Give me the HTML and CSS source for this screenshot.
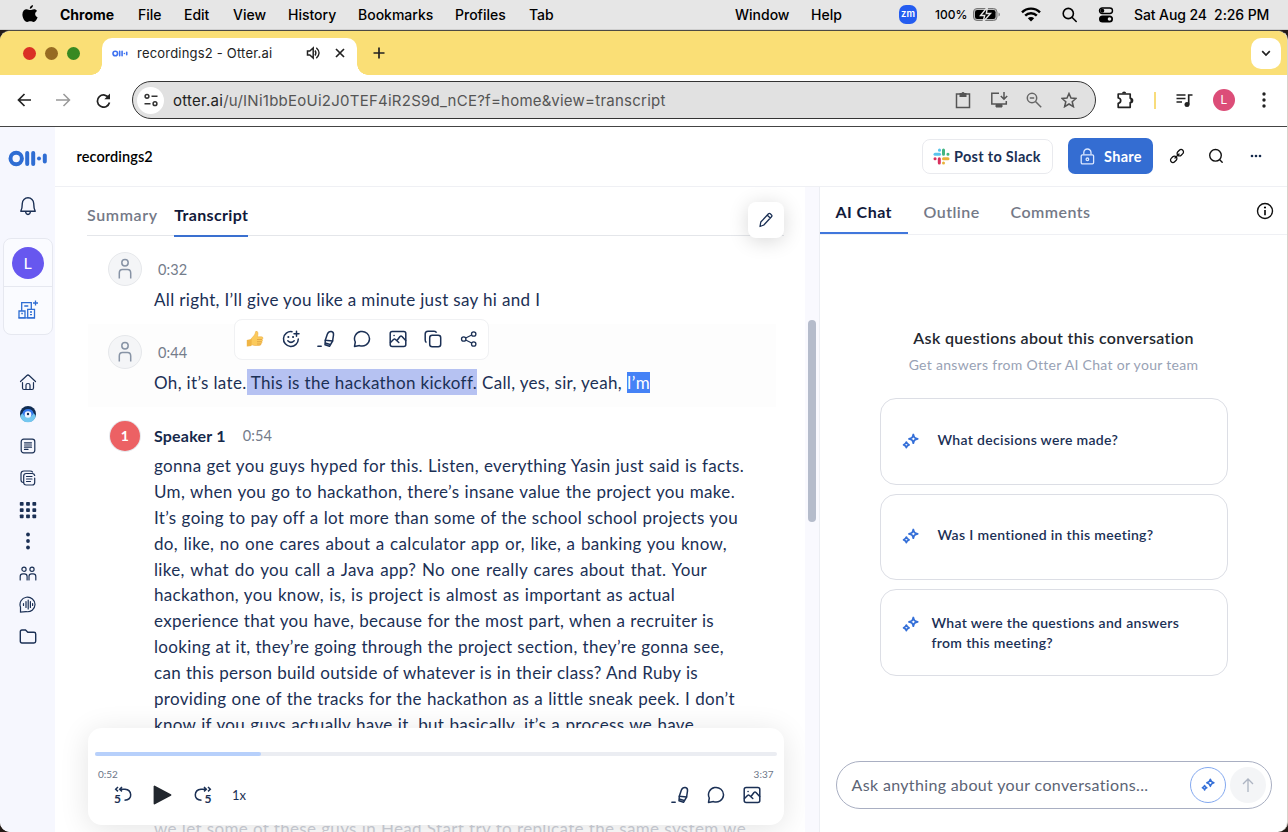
FILE: index.html
```html
<!DOCTYPE html>
<html lang="en">
<head>
<meta charset="utf-8">
<title>recordings2 - Otter.ai</title>
<link rel="stylesheet" href="styles.css">
</head>
<body>
<svg class="defs" width="0" height="0">
  <defs>
    <symbol id="sparkle" viewBox="0 0 18 18"><path d="M12 1.600c.7 3.200 1.400 3.900 4.600 4.600-3.200.7-3.900 1.400-4.600 4.600-.7-3.200-1.400-3.900-4.600-4.600 3.200-.7 3.900-1.400 4.600-4.600zM4.600 9.600c.5 1.900 1 2.400 2.900 2.900-1.900.5-2.400 1-2.900 2.900-.5-1.900-1-2.400-2.900-2.900 1.900-.5 2.400-1 2.900-2.900z" fill="none" stroke="currentColor" stroke-width="1.900" stroke-linejoin="round"/></symbol>
    <symbol id="marker" viewBox="0 0 18 18"><g fill="none" stroke="currentColor" stroke-width="1.500" stroke-linejoin="round" stroke-linecap="round"><path d="M8.300 10.300 10.300 4.300Q11.500 1.200 14.300 1.500q2.500.4 2.200 3.300L15.600 11z"/><path d="m8.300 10.300-.3 4.500 4.500 1.500 3.100-5.300M8.200 13l5 1.500"/><path d="M.9 16.300h3.300"/></g></symbol>
    <symbol id="bubble" viewBox="0 0 18 18"><path d="M1.500 16.400 2.300 12A7.500 7.300 0 1 1 6.500 15.600z" fill="none" stroke="currentColor" stroke-width="1.500" stroke-linejoin="round"/></symbol>
    <symbol id="image" viewBox="0 0 18 18"><g fill="none" stroke="currentColor" stroke-width="1.500" stroke-linejoin="round" stroke-linecap="round"><rect x="1.200" y="1.500" width="15.600" height="15" rx="2"/><path d="M1.500 12.500 4.500 9.500q1-.8 2 0l3.300 3M8 10.500 11 6.500q1-1 2 0l3.700 4"/><path d="M5 5.500h.1"/></g></symbol>
    <symbol id="person" viewBox="0 0 16 22"><g fill="none" stroke="currentColor" stroke-width="1.500"><circle cx="8" cy="4.800" r="3.200"/><path d="M2.300 20.500v-5.500Q2.300 11.500 5.500 11.500h5q3.200 0 3.200 3.500V20.500"/></g></symbol>
    <symbol id="otter" viewBox="0 0 40 17"><circle cx="8.200" cy="8.500" r="5.700" fill="none" stroke="currentColor" stroke-width="4"/><path d="M19.200 3v11M25.200 3v11M36.800 5.500v6" stroke="currentColor" stroke-width="4" stroke-linecap="round"/><circle cx="31" cy="8.500" r="2" fill="currentColor"/></symbol>
  </defs>
</svg>

<header class="menubar">
  <svg class="apple" width="16" height="18" viewBox="0 0 16 18"><path d="M11 0c.1 1.900-1.400 3.700-3.200 3.800C7.600 2 9.200.3 11 0zM15 6c-2.700 1.600-2.300 5 .6 6.200-.8 2.300-2.300 4.700-4 4.700-1.300 0-1.700-.7-3.200-.7s-2 .7-3.200.7C2.600 16.900.4 12.700.4 9.400c0-3.300 2.100-5.200 4.200-5.200 1.500 0 2.500.8 3.700.8 1.100 0 2-.8 3.800-.8 1.200 0 2.300.6 2.900 1.800z"/></svg>
  <b>Chrome</b><span>File</span><span>Edit</span><span>View</span><span>History</span><span>Bookmarks</span><span>Profiles</span><span>Tab</span><span>Window</span><span>Help</span>
  <span class="zoom-app">zm</span>
  <span class="percent">100%</span>
  <svg width="28" height="14" viewBox="0 0 28 14"><rect x=".5" y=".5" width="23.500" height="12" rx="3.500" fill="#bbb" stroke="#777"/><rect x="2" y="2" width="20.500" height="9" rx="2.200"/><path d="M25.500 4.500v4q1.500-.5 1.500-2t-1.500-2z" fill="#888"/><path d="M14.500-1 7.500 7.500h4.200L10 14l7.500-8.500h-4.200z" stroke="#e6e6e6" stroke-width="1.400"/></svg>
  <svg width="20" height="15" viewBox="0 0 20 15"><g fill="none" stroke="#000" stroke-width="2.400"><path d="M1 5.300a12.800 12.800 0 0 1 18 0M4.200 8.600a8.200 8.200 0 0 1 11.600 0"/></g><path d="M10 14.500 6.800 11.300a4.500 4.500 0 0 1 6.400 0z"/></svg>
  <svg width="16" height="16" viewBox="0 0 16 16"><g fill="none" stroke="#000" stroke-width="1.600" stroke-linecap="round"><circle cx="6.300" cy="6.500" r="5.100"/><path d="m10.200 10.500 4 4"/></g></svg>
  <svg width="16" height="16" viewBox="0 0 16 16"><rect x="1.500" y="1" width="13" height="5.500" rx="2.750" fill="none" stroke="#000" stroke-width="1.400"/><circle cx="4.300" cy="3.750" r="2"/><rect x="1" y="8.500" width="14" height="7" rx="3.500"/><circle cx="11.500" cy="12" r="1.800" fill="#e6e6e6"/></svg>
  <span class="clock">Sat Aug 24&nbsp; 2:26 PM</span>
</header>

<div class="desktop">
<div class="window">
  <div class="tabstrip">
    <div class="lights"><i class="red"></i><i class="amber"></i><i class="green"></i></div>
    <div class="browser-tab">
      <svg class="favicon" width="16" height="7"><use href="#otter"/></svg>
      <span class="tab-title">recordings2 - Otter.ai</span>
      <svg width="15" height="14" viewBox="0 0 15 14"><path d="M1.500 5h2.300L7.200 2v10L3.800 9H1.500z" fill="none" stroke="#222" stroke-width="1.500"/><path d="M9 4.500q1.800 2.500 0 5M10.300 1.800q5.500 5.200 0 10.400" fill="none" stroke="#222" stroke-width="1.400"/></svg>
      <svg width="10" height="10" viewBox="0 0 10 10"><path d="m1 1 8 8M9 1 1 9" stroke="#222" stroke-width="1.700"/></svg>
    </div>
    <svg class="new-tab" width="12" height="12" viewBox="0 0 12 12"><path d="M6 .5v11M.5 6h11" stroke="#222" stroke-width="1.700"/></svg>
    <div class="tab-search"><svg width="10" height="7" viewBox="0 0 10 7"><path d="m1.200 1.200 3.800 3.800 3.800-3.800" fill="none" stroke="#222" stroke-width="1.700"/></svg></div>
  </div>

  <div class="toolbar">
    <svg width="15" height="14" viewBox="0 0 15 14"><path d="M14 7H2M7.500 1l-6 6 6 6" fill="none" stroke="#222" stroke-width="1.700"/></svg>
    <svg width="15" height="14" viewBox="0 0 15 14"><path d="M0 7h13M7.500 1l6 6-6 6" fill="none" stroke="#999" stroke-width="1.500"/></svg>
    <svg width="15" height="15" viewBox="0 0 15 15"><path d="M13 5.300A6.100 6.100 0 1 0 13.500 9.500" fill="none" stroke="#222" stroke-width="1.700"/><path d="M14 .5v5.700H8.300z" fill="#222"/></svg>
    <div class="omnibox">
      <span class="site-info"><svg width="14" height="14" viewBox="0 0 14 14"><g fill="none" stroke="#333" stroke-width="1.500"><circle cx="3" cy="3.300" r="1.900"/><circle cx="11" cy="10.700" r="1.900"/><path d="M7.500 3.300h6M.5 10.700h6"/></g></svg></span>
      <span class="url"><em>otter.ai</em>/u/INi1bbEoUi2J0TEF4iR2S9d_nCE?f=home&amp;view=transcript</span>
      <svg width="16" height="18" viewBox="0 0 16 18"><path d="M1.500 3h13v13.500h-13z" fill="none" stroke="#555" stroke-width="1.500"/><path d="M4.500 2h2a1.600 1.600 0 0 1 3 0h2v4h-7z" fill="#555"/></svg>
      <svg width="18" height="18" viewBox="0 0 18 18"><path d="M9 2.200H1.800V13h14.500V10" fill="none" stroke="#555" stroke-width="1.500"/><path d="M6 13.500h6V16H6z" fill="#555" stroke="#555"/><path d="M14 1v7M10.800 5l3.200 3.200L17.200 5" fill="none" stroke="#555" stroke-width="1.500"/></svg>
      <svg width="16" height="16" viewBox="0 0 16 16"><g fill="none" stroke="#666" stroke-width="1.500"><circle cx="6" cy="6" r="4.700"/><path d="m9.500 9.500 5.700 5.700M3.800 6h4.400"/></g></svg>
      <svg width="16" height="16" viewBox="0 0 16 16"><path d="m8 1.500 2 4.600 5 .4-3.800 3.300 1.200 4.900L8 12l-4.400 2.700 1.200-4.900L1 6.500l5-.4z" fill="none" stroke="#555" stroke-width="1.500"/></svg>
    </div>
    <svg width="18" height="18" viewBox="0 0 18 18"><path d="M2.200 3h12v4.300q2.300.2 2.300 2.200t-2.300 2.200v4.600h-12v-4q2.500-.3 2.500-2.700T2.200 7z" fill="none" stroke="#222" stroke-width="1.700" stroke-linejoin="round"/><path d="M6 2.500a2.100 2.100 0 0 1 4.200 0zM14.500 7.300a2.200 2.200 0 0 1 0 4.400z" fill="#222"/></svg>
    <i class="separator"></i>
    <svg width="17" height="15" viewBox="0 0 17 15"><path d="M.5 2h9M.5 5.500h9M.5 9h5.500M12.700 11.500V2h3.800" fill="none" stroke="#222" stroke-width="1.700"/><circle cx="11" cy="11.500" r="2.500" fill="#222"/></svg>
    <span class="profile">L</span>
    <svg width="4" height="16" viewBox="0 0 4 16" fill="#222"><circle cx="2" cy="2" r="1.700"/><circle cx="2" cy="8" r="1.700"/><circle cx="2" cy="14" r="1.700"/></svg>
  </div>

  <div class="app">
    <nav class="sidebar">
      <svg class="logo" width="40" height="17"><use href="#otter"/></svg>
      <svg class="bell" width="18" height="20" viewBox="0 0 18 20"><path d="M1.800 15.300Q3.300 12 3.300 7.500A5.600 5.600 0 0 1 14.700 7.500Q14.700 12 16.200 15.300zM6.500 15.500q.5 3 2.500 3t2.500-3" fill="none" stroke="currentColor" stroke-width="1.400" stroke-linejoin="round"/></svg>
      <div class="account">
        <div class="account-cell"><span class="avatar">L</span></div>
        <div class="account-cell"><svg class="blue" width="20" height="19" viewBox="0 0 20 19"><g fill="none" stroke="currentColor" stroke-width="1.300"><path d="M3.700 11V2.700h9.600v6M1 17.800V11h6v6.800zM7 17.500V11M9.700 9.300h6.800v8.500H9.700z"/><path d="M6.300 6h4M.5 17.800h16.500M3.300 13.500h1.500M12 12h2M12 14.700h2M17.500.5v5M15 3h5"/></g></svg></div>
      </div>
      <div class="nav-list">
        <svg width="18" height="18" viewBox="0 0 18 18"><path d="m1.500 8.500 6.400-6q1.100-1 2.200 0l6.400 6M3.500 9.500v5.500q0 1.500 1.500 1.500h8q1.500 0 1.500-1.500V9.500M7 16.500V12q0-1.500 2-1.500t2 1.500v4.500" fill="none" stroke="currentColor" stroke-width="1.200" stroke-linecap="round"/></svg>
        <svg width="18" height="18" viewBox="0 0 18 18"><circle cx="9" cy="9" r="8" fill="#102c52"/><path d="M1.300 11.500q1-3.500 4-4h7.400q3 .5 4 4a8 8 0 0 1-15.400 0z" fill="#73c7f0"/><path d="M3.300 8.500q1-4.500 5.700-4.500t5.700 4.500l-2.700 3H6z" fill="#3479ec"/><circle cx="9" cy="9.500" r="3.300" fill="#f4f7ff"/><circle cx="9" cy="9" r="1.200" fill="#102c52"/></svg>
        <svg width="16" height="16" viewBox="0 0 16 16"><g fill="none" stroke="currentColor" stroke-width="1.200" stroke-linecap="round"><rect x="1.200" y="1.200" width="13.600" height="13.600" rx="2.500"/><path d="M4.500 4.800h7M4.500 7h7M4.500 9.200h7M4.500 11.400h3.500"/></g></svg>
        <svg width="16" height="16" viewBox="0 0 16 16"><g fill="none" stroke="currentColor" stroke-width="1.200" stroke-linecap="round"><path d="M3.500 12.500q-2.500 0-2.500-2.500V4q0-3 3-3h6q2 0 2.500 1"/><path d="M14.700 8v4.500q0 2.500-2.500 2.500h-6q-2.500 0-2.500-2.500V6q0-2.500 2.500-2.500h6q2 0 2.500 2"/><path d="M6.500 6.500h5.500M6.500 9h5.500M6.500 11.500h4"/></g></svg>
        <svg width="18" height="18" viewBox="0 0 18 18" fill="currentColor"><g id="row"><rect x=".8" y="1" width="3.800" height="3.800" rx=".8"/><rect x="7.100" y="1" width="3.800" height="3.800" rx=".8"/><rect x="13.400" y="1" width="3.800" height="3.800" rx=".8"/></g><use href="#row" y="6.200"/><use href="#row" y="12.400"/></svg>
        <svg width="18" height="18" viewBox="0 0 18 18" fill="currentColor"><circle cx="9" cy="2.500" r="1.900"/><circle cx="9" cy="9" r="1.900"/><circle cx="9" cy="15.500" r="1.900"/></svg>
        <svg width="18" height="16" viewBox="0 0 18 16"><g fill="none" stroke="currentColor" stroke-width="1.200" stroke-linecap="round"><circle cx="5" cy="4.200" r="2.100"/><circle cx="13" cy="4.200" r="2.100"/><path d="M1.200 15v-3.500q0-2.700 2.700-2.700h1.500q2.700 0 2.700 2.700V15M10 15v-3.500q0-2.700 2.500-2.700h1.700q2.600 0 2.600 2.700V15"/></g></svg>
        <svg width="18" height="17" viewBox="0 0 18 17"><g fill="none" stroke="currentColor" stroke-width="1.200" stroke-linecap="round"><path d="M1.500 16v-5A7.500 7.300 0 1 1 7 15.600L1.500 16z"/><path d="M4.500 7.500v2M7 5.500v6M9.200 4v9M11.400 5.500v6M13.600 7.500v2"/></g></svg>
        <svg width="18" height="15" viewBox="0 0 18 15"><path d="M1.300 2.800q0-1.800 1.700-1.800h3.500l2.300 2.300h6.200q1.700 0 1.700 1.700v7.300q0 1.700-1.700 1.700H3q-1.700 0-1.700-1.700z" fill="none" stroke="currentColor" stroke-width="1.400"/></svg>
      </div>
    </nav>

    <main class="content">
      <div class="page-head">
        <h1>recordings2</h1>
        <button class="slack">
          <svg width="17" height="17" viewBox="0 0 17 17"><g stroke-width="3" stroke-linecap="round"><path d="M6.500 6.300H2" stroke="#5bc4ec"/><path d="M6.500 2.100v.1" stroke="#5bc4ec"/><path d="M10.500 6.300V2M14.900 6.300h.1" stroke="#43b581"/><path d="M10.500 10.700H15M10.500 15v.1" stroke="#e9b13b"/><path d="M6.300 10.700V15M2 10.700h.1" stroke="#d9315e"/></g></svg>
          <span>Post to Slack</span>
        </button>
        <button class="share">
          <svg width="15" height="17" viewBox="0 0 15 17"><g fill="none" stroke="#dce8ff" stroke-width="1.300"><rect x="1.200" y="6.800" width="12.400" height="9" rx="1.200"/><path d="M3.800 6.500V4.600a3.600 3.600 0 0 1 7.200 0v1.900"/><circle cx="7.400" cy="11.300" r="1.300"/></g></svg>
          <span>Share</span>
        </button>
        <svg width="16" height="16" viewBox="0 0 16 16"><g fill="none" stroke="#111" stroke-width="1.300" stroke-linecap="round"><rect x="-3.500" y="-2.400" width="7" height="4.800" rx="2.400" transform="translate(11.300 4.700) rotate(-45)"/><rect x="-3.500" y="-2.400" width="7" height="4.800" rx="2.400" transform="translate(4.700 11.300) rotate(-45)"/><path d="m6 10 4-4"/></g></svg>
        <svg width="16" height="16" viewBox="0 0 16 16"><g fill="none" stroke="#111" stroke-width="1.400" stroke-linecap="round"><circle cx="7.500" cy="7.300" r="5.800"/><path d="m11.700 11.700 2.500 2.600"/></g></svg>
        <svg width="12" height="4" viewBox="0 0 12 4" fill="#14294b"><circle cx="2" cy="2" r="1.300"/><circle cx="6" cy="2" r="1.300"/><circle cx="10" cy="2" r="1.300"/></svg>
      </div>

      <div class="columns">
        <section class="transcript">
          <div class="view-tabs"><span class="tab summary">Summary</span><span class="tab active">Transcript</span></div>
          <button class="edit"><svg width="14" height="16" viewBox="0 0 14 16"><path d="M1 14.500 1.800 10 9.500 1.800q.9-.8 1.800 0l1.200 1.100q.9.900 0 1.800L4.800 13zM8.300 3.200l3 2.800" fill="none" stroke="currentColor" stroke-width="1.300" stroke-linejoin="round"/></svg></button>

          <article class="segment first">
            <div class="who"><span class="face"><svg width="16" height="22"><use href="#person"/></svg></span><time>0:32</time></div>
            <p>All right, I’ll give you like a minute just say hi and I</p>
          </article>
          <article class="segment hovered">
            <div class="who"><span class="face"><svg width="16" height="22"><use href="#person"/></svg></span><time>0:44</time></div>
            <p>Oh, it’s late.<mark> This is the hackathon kickoff.</mark> <span class="rest">Call, yes, sir, yeah,</span> <mark class="current">I’m</mark></p>
            <div class="reactions">
              <svg width="18" height="18" viewBox="0 0 18 18"><path d="M5 9 8.500 5q1-2 1.200-3.500 1.800-.7 2.200 1.300.2 1.500-.5 4h4q1.500 0 1.500 1.300 0 1-.8 1.300.9 1.100-.3 2.300.5 1.300-.7 2 .1 1.800-2 1.800H8.500L5 14.500z" fill="#fbca5c" stroke="#eeae45" stroke-width=".6"/><path d="M.8 10 5.500 9v7L.8 16.500z" fill="#f0b545"/><path d="M11 9.500h5M11 11.700h4.700M11 14h4" stroke="#d99a3c" stroke-width=".7"/></svg>
              <svg width="18" height="18" viewBox="0 0 18 18"><g fill="none" stroke="currentColor" stroke-width="1.500" stroke-linecap="round"><path d="M10 1.700A7.400 7.400 0 1 0 16.300 9M5.800 10.800q3.200 3.200 6.400 0M14.500 1.300v5M12 3.800h5"/><path d="M6.300 7h.1M11 7h.1" stroke-width="2"/></g></svg>
              <svg width="18" height="18"><use href="#marker"/></svg>
              <svg width="18" height="18"><use href="#bubble"/></svg>
              <svg width="18" height="18"><use href="#image"/></svg>
              <svg width="18" height="18" viewBox="0 0 18 18"><g fill="none" stroke="currentColor" stroke-width="1.500"><rect x="5.700" y="5.200" width="11" height="11.500" rx="2.500"/><path d="M2.500 12.500q-1.300-.5-1.300-2.500V4q0-2.800 2.800-2.800h6q2 0 2.500 1.500"/></g></svg>
              <svg width="18" height="18" viewBox="0 0 18 18"><g fill="none" stroke="currentColor" stroke-width="1.300"><circle cx="3.700" cy="9" r="2.200"/><circle cx="13.700" cy="4" r="2.200"/><circle cx="13.700" cy="14" r="2.200"/><path d="m5.700 8 6-3M5.700 10l6 3"/></g></svg>
            </div>
          </article>
          <article class="segment speech">
            <div class="who"><span class="face speaker">1</span><strong>Speaker 1</strong><time>0:54</time></div>
            <p class="lines">
              <span style="width:590px">gonna get you guys hyped for this. Listen, everything Yasin just said is facts.</span>
              <span style="width:581px">Um, when you go to hackathon, there’s insane value the project you make.</span>
              <span style="width:584px">It’s going to pay off a lot more than some of the school school projects you</span>
              <span style="width:573px">do, like, no one cares about a calculator app or, like, a banking you know,</span>
              <span style="width:553px">like, what do you call a Java app? No one really cares about that. Your</span>
              <span style="width:521px">hackathon, you know, is, is project is almost as important as actual</span>
              <span style="width:560px">experience that you have, because for the most part, when a recruiter is</span>
              <span style="width:570px">looking at it, they’re going through the project section, they’re gonna see,</span>
              <span style="width:544px">can this person build outside of whatever is in their class? And Ruby is</span>
              <span style="width:581px">providing one of the tracks for the hackathon as a little sneak peek. I don’t</span>
              <span style="width:540px">know if you guys actually have it, but basically, it’s a process we have</span>
            </p>
            <p class="lines upcoming"><span style="width:592px">we let some of these guys in Head Start try to replicate the same system we</span></p>
          </article>

          <div class="player">
            <div class="track"><i></i></div>
            <div class="times"><span>0:52</span><span>3:37</span></div>
            <div class="controls">
              <svg width="18" height="18" viewBox="0 0 18 18"><path d="M4 1 1.700 3.200 4 5.400M8 1 5.700 3.200 8 5.400M6 3.200h5q5.500.5 5.700 5.600t-6.200 5.400" fill="none" stroke="currentColor" stroke-width="1.500"/><text class="step" x="0" y="17">5</text></svg>
              <svg class="play" width="19" height="20" viewBox="0 0 19 20"><path d="M1.500 1.500v17L17.500 10z" fill="#22272e" stroke="#22272e" stroke-width="1.800" stroke-linejoin="round"/></svg>
              <svg width="18" height="18" viewBox="0 0 18 18"><path d="M14 1l2.300 2.200L14 5.400M10 1l2.300 2.200L10 5.400M12 3.200H7Q1.500 3.700 1.300 8.800t6.200 5.400" fill="none" stroke="currentColor" stroke-width="1.500"/><text class="step" x="10.500" y="17">5</text></svg>
              <span class="speed">1x</span>
              <svg class="push" width="18" height="18"><use href="#marker"/></svg>
              <svg width="18" height="18"><use href="#bubble"/></svg>
              <svg width="18" height="18"><use href="#image"/></svg>
            </div>
          </div>
        </section>

        <div class="gutter"><i></i></div>

        <aside class="chat">
          <div class="chat-tabs">
            <span class="active">AI Chat</span><span>Outline</span><span>Comments</span>
            <svg width="18" height="18" viewBox="0 0 18 18"><g fill="none" stroke="#111" stroke-width="1.400"><circle cx="9" cy="9" r="7.500"/><path d="M9 8v5.300" stroke-width="1.700"/></g><circle cx="9" cy="5.500" r="1.100"/></svg>
          </div>
          <div class="prompts">
            <h2>Ask questions about this conversation</h2>
            <p>Get answers from Otter AI Chat or your team</p>
            <button class="card"><svg width="17" height="17"><use href="#sparkle"/></svg><span>What decisions were made?</span></button>
            <button class="card"><svg width="17" height="17"><use href="#sparkle"/></svg><span>Was I mentioned in this meeting?</span></button>
            <button class="card long"><svg width="17" height="17"><use href="#sparkle"/></svg><span>What were the questions and answers<br>from this meeting?</span></button>
          </div>
          <div class="ask">
            <span>Ask anything about your conversations...</span>
            <i class="spark"><svg width="14" height="14"><use href="#sparkle"/></svg></i>
            <i class="send"><svg width="12" height="14" viewBox="0 0 12 14"><path d="M6 14V1.500M1 6l5-5 5 5" fill="none" stroke="#adb4c2" stroke-width="1.300"/></svg></i>
          </div>
        </aside>
      </div>
    </main>
  </div>
</div>
</div>
</body>
</html>
```

FILE: styles.css
```css
* { box-sizing: border-box; }
body { margin: 0; width: 1288px; height: 832px; overflow: hidden; font-family: Lato, "Liberation Sans", sans-serif; color: #1b3055; }
svg { display: block; flex: none; }
svg.defs { position: absolute; }
button { font: inherit; color: inherit; background: none; border: 0; padding: 0; }
h1, h2, p { margin: 0; font-weight: 400; }
i, em { font-style: normal; }

.menubar { height: 30px; background: #e6e6e6; display: grid; grid-template-columns: 38px 78px 46px 49px 55px 70px 97px 74px 206px 76px 88px 36px 38px 48px 41px 36px 36px 150px; padding-left: 22px; align-items: center; font: 500 14px Inter, sans-serif; color: #000; white-space: nowrap; border-bottom: 1px solid #cfcfcf; }
.menubar b { font-weight: 700; }
.apple { margin-top: -2px; }
.zoom-app { width: 18px; height: 19px; border-radius: 7px; background: #245cf0; color: #fff; font-size: 9.500px; font-weight: 600; text-align: center; line-height: 17px; }
.percent { font-size: 12px; }
.clock { letter-spacing: -.1px; }

.desktop { background: #231b17; height: 802px; }
.window { height: 802px; border-top: 1px solid #4c4a44; border-right: 1px solid #d8d4cc; border-radius: 10px; overflow: hidden; background: #fff; }
.tabstrip { height: 44px; background: #fadf76; display: flex; align-items: flex-start; }
.lights { display: flex; gap: 9px; padding: 16px 0 0 23px; width: 102px; }
.lights i { width: 13px; height: 13px; border-radius: 50%; }
.red { background: #da3025; }
.amber { background: #976b22; }
.green { background: #388922; }
.browser-tab { position: relative; width: 255px; height: 37px; margin-top: 7px; background: #fff; border-radius: 10px 10px 0 0; display: grid; grid-template-columns: 25px 169px 29px 20px; align-items: center; padding: 0 0 7px 10px; font: 13px Inter, sans-serif; letter-spacing: .2px; color: #222; white-space: nowrap; }
.browser-tab::before, .browser-tab::after { content: ""; position: absolute; bottom: 0; width: 11px; height: 11px; }
.browser-tab::before { left: -11px; background: radial-gradient(circle at 0 0, transparent 10.500px, #fff 11px); }
.browser-tab::after { right: -11px; background: radial-gradient(circle at 100% 0, transparent 10.500px, #fff 11px); }
.favicon { color: #3f72f0; }
.new-tab { margin: 16px auto 0 16px; }
.tab-search { width: 30px; height: 31px; margin: 7px 6px 0 0; border-radius: 10px; background: #fff; display: grid; place-items: center; }
.toolbar { height: 52px; display: grid; grid-template-columns: 39px 40px 36px 984px 38px 22px 37px 49px 10px; align-items: center; padding: 0 0 1px 17px; border-bottom: 1px solid #444; }
.omnibox { width: 964px; height: 38px; border: 1px solid #333; border-radius: 19px; background: #e1e1e1; display: grid; grid-template-columns: 36px 782px 35px 36px 35px 20px; align-items: center; padding-left: 4px; }
.site-info { width: 27px; height: 27px; border-radius: 50%; background: #fff; display: grid; place-items: center; }
.url { font: 15px Inter, sans-serif; letter-spacing: .25px; color: #555; white-space: nowrap; }
.url em { color: #222; }
.separator { width: 2px; height: 17px; background: #f8dc7b; }
.profile { width: 22px; height: 22px; border-radius: 50%; background: #dc4d78; color: #fff; font: 12px/22px Inter, sans-serif; text-align: center; }

.app { display: flex; height: 705px; }
.sidebar { width: 55px; background: #f6f7fe; padding-top: 23px; display: flex; flex-direction: column; align-items: center; }
.logo, .blue { color: #2f6dd3; }
.bell { margin-top: 29px; }
.account { width: 50px; height: 97px; margin-top: 22px; border: 1px solid #e6e8f0; border-radius: 8px; background: #fafbff; }
.account-cell { height: 47px; display: grid; place-items: center; }
.account-cell + .account-cell { border-top: 1px solid #e6e8f0; height: 48px; padding-bottom: 2px; }
.avatar { width: 32px; height: 32px; border-radius: 50%; background: #6757ef; color: #fff; font-size: 16px; line-height: 32px; text-align: center; }
.nav-list { margin-top: 31.500px; display: grid; grid-auto-rows: 31.800px; place-items: center; }

.content { flex: 1; min-width: 0; }
.page-head { height: 60px; border-bottom: 1px solid #eff0f4; display: flex; align-items: center; padding: 0 0 1px 21.500px; }
.page-head h1 { width: 845.500px; font-size: 14.500px; letter-spacing: .1px; font-weight: 600; color: #000; }
.slack { width: 131px; height: 35px; border: 1px solid #e9eaee; border-radius: 8px; display: flex; align-items: center; padding-left: 10px; gap: 4px; font-size: 14.500px; letter-spacing: .3px; font-weight: 700; white-space: nowrap; margin-right: 15px; }
.share { width: 85px; height: 36px; border-radius: 7px; background: #346dd2; color: #fff; display: flex; align-items: center; padding-left: 12px; gap: 9px; font-size: 14.500px; letter-spacing: .3px; font-weight: 700; margin-right: 16px; }
.page-head > svg { margin-right: 23px; }
.page-head > svg:nth-last-child(2) { margin-right: 26px; }

.columns { display: grid; grid-template-columns: 750px 15px 467px; height: 645px; }
.transcript { position: relative; overflow: hidden; }
.view-tabs { height: 49px; margin: 0 21px 0 32px; border-bottom: 1px solid #e4e6ea; display: flex; gap: 16.500px; white-space: nowrap; font-size: 16px; letter-spacing: .6px; font-weight: 600; line-height: 56px; color: #747987; }
.view-tabs .active { height: 50px; border-bottom: 2px solid #3a70d0; color: #11193a; font-weight: 700; letter-spacing: .36px; }
.edit { position: absolute; left: 693px; top: 15px; width: 36px; height: 36px; border-radius: 8px; background: #fff; box-shadow: 0 3px 20px #00000028; display: grid; place-items: center; }
.segment { position: relative; margin: 0 29px 0 33px; padding-left: 66px; font-size: 17px; letter-spacing: .35px; line-height: 25.870px; white-space: nowrap; }
.lines > span { display: block; text-align-last: justify; letter-spacing: .33px; }
.who { display: flex; align-items: center; height: 34px; margin-left: -46px; color: #747c8b; }
.who time { font-size: 14.500px; letter-spacing: .1px; padding-top: 1px; }
.face { width: 34px; height: 34px; border: 1px solid #e6e8eb; border-radius: 50%; background: #f4f5f7; display: grid; place-items: center; color: #8793a5; margin-right: 16px; }
.first { height: 88px; padding-top: 16px; }
.first p, .hovered p { margin-top: .500px; }
.hovered { height: 83px; background: #fdfdfd; padding-top: 11px; }
mark { background: #b6c2f2; color: inherit; padding: 3px 0 2px; }
mark.current { background: #4582f6; color: #fff; padding: 0; }
.reactions { position: absolute; left: 146px; top: -5px; width: 255px; height: 41px; border: 1px solid #f0f1f3; border-radius: 8px; background: #fff; display: flex; justify-content: space-between; align-items: center; padding: 0 10px 1px 11px; }
.speech { padding-top: 12px; }
.speech .who time { padding-top: 0; }
.face.speaker { width: 30px; height: 30px; background: #ec6164; border: 0; color: #fff; font-size: 14px; font-weight: 700; box-shadow: 0 0 0 1px #e7e9ed; margin: 0 14px 0 2px; }
.who strong { color: #16294b; font-size: 16px; letter-spacing: .2px; margin-right: 17px; }
.segment .upcoming { margin-top: 78px; color: #cdd0d8; }
.player { position: absolute; left: 32.500px; top: 541px; width: 696.500px; height: 97px; border-radius: 14px; background: #fff; box-shadow: 0 4px 30px #0000001c; padding: 24px 7px 0; }
.track { height: 4px; border-radius: 2px; background: #ebedf2; }
.track i { display: block; width: 166px; height: 4px; border-radius: 2px; background: #b7d0fb; }
.times { display: flex; justify-content: space-between; padding: 11px 3.500px 0; font-size: 10px; line-height: 14px; color: #6c7688; }
.controls { display: flex; align-items: center; height: 28px; padding: 0 16px 0 19.500px; font-size: 13px; }
.step { font: 700 12px Lato, sans-serif; letter-spacing: 0; fill: currentColor; }
.play { margin: 0 22px 0 21px; }
.speed { margin-left: 20px; }
.controls .push { margin-left: auto; }
.controls .push, .controls .push + svg { margin-right: 18px; }

.gutter { background: #f9f9fe; border-right: 1px solid #eceef3; padding: 133px 0 0 3px; }
.gutter i { display: block; width: 8px; height: 202px; border-radius: 4px; background: #b5bccb; }

.chat { display: flex; flex-direction: column; }
.chat-tabs { height: 48px; border-bottom: 1px solid #eff0f4; display: grid; grid-template-columns: 88px 87px 245.500px 20px; font-size: 16px; letter-spacing: .46px; font-weight: 600; line-height: 50px; color: #747987; white-space: nowrap; }
.chat-tabs span { padding-left: 15.500px; }
.chat-tabs .active { height: 47px; border-bottom: 2px solid #4177dc; color: #11193a; font-weight: 700; }
.chat-tabs svg { margin: 14.500px 0 0 15px; }
.prompts { display: flex; flex-direction: column; align-items: center; padding-top: 91px; gap: 9px; }
.prompts h2 { font-size: 16px; letter-spacing: .33px; line-height: 24px; font-weight: 600; color: #23272f; }
.prompts p { font-size: 14px; letter-spacing: .3px; line-height: 20px; color: #98a2b5; margin: -4.500px 0 14.500px; }
.card { width: 348px; height: 86.500px; border: 1px solid #dcdee5; border-radius: 16px; display: flex; align-items: center; padding-left: 21.500px; text-align: left; font-size: 14px; letter-spacing: .33px; font-weight: 600; line-height: 20px; white-space: nowrap; }
.card svg, .spark { color: #346fd8; }
.card span { margin-left: 18.500px; margin-top: -3px; }
.card.long span { margin-left: 12.500px; margin-top: 1px; }
.card.long svg { margin-top: -16px; }
.ask { width: 436px; height: 48px; margin: auto 0 23px 15.500px; border: 1px solid #a9afc2; border-radius: 24px; display: flex; align-items: center; padding-left: 15px; font-size: 16px; letter-spacing: .35px; color: #5c6475; white-space: nowrap; }
.ask span { width: 338.500px; margin-top: -2px; }
.ask i { width: 36px; height: 36px; border-radius: 50%; display: grid; place-items: center; }
.spark { border: 1px solid #84a9f0; margin-right: 4px; }
.send { background: #f4f5f7; }
```
